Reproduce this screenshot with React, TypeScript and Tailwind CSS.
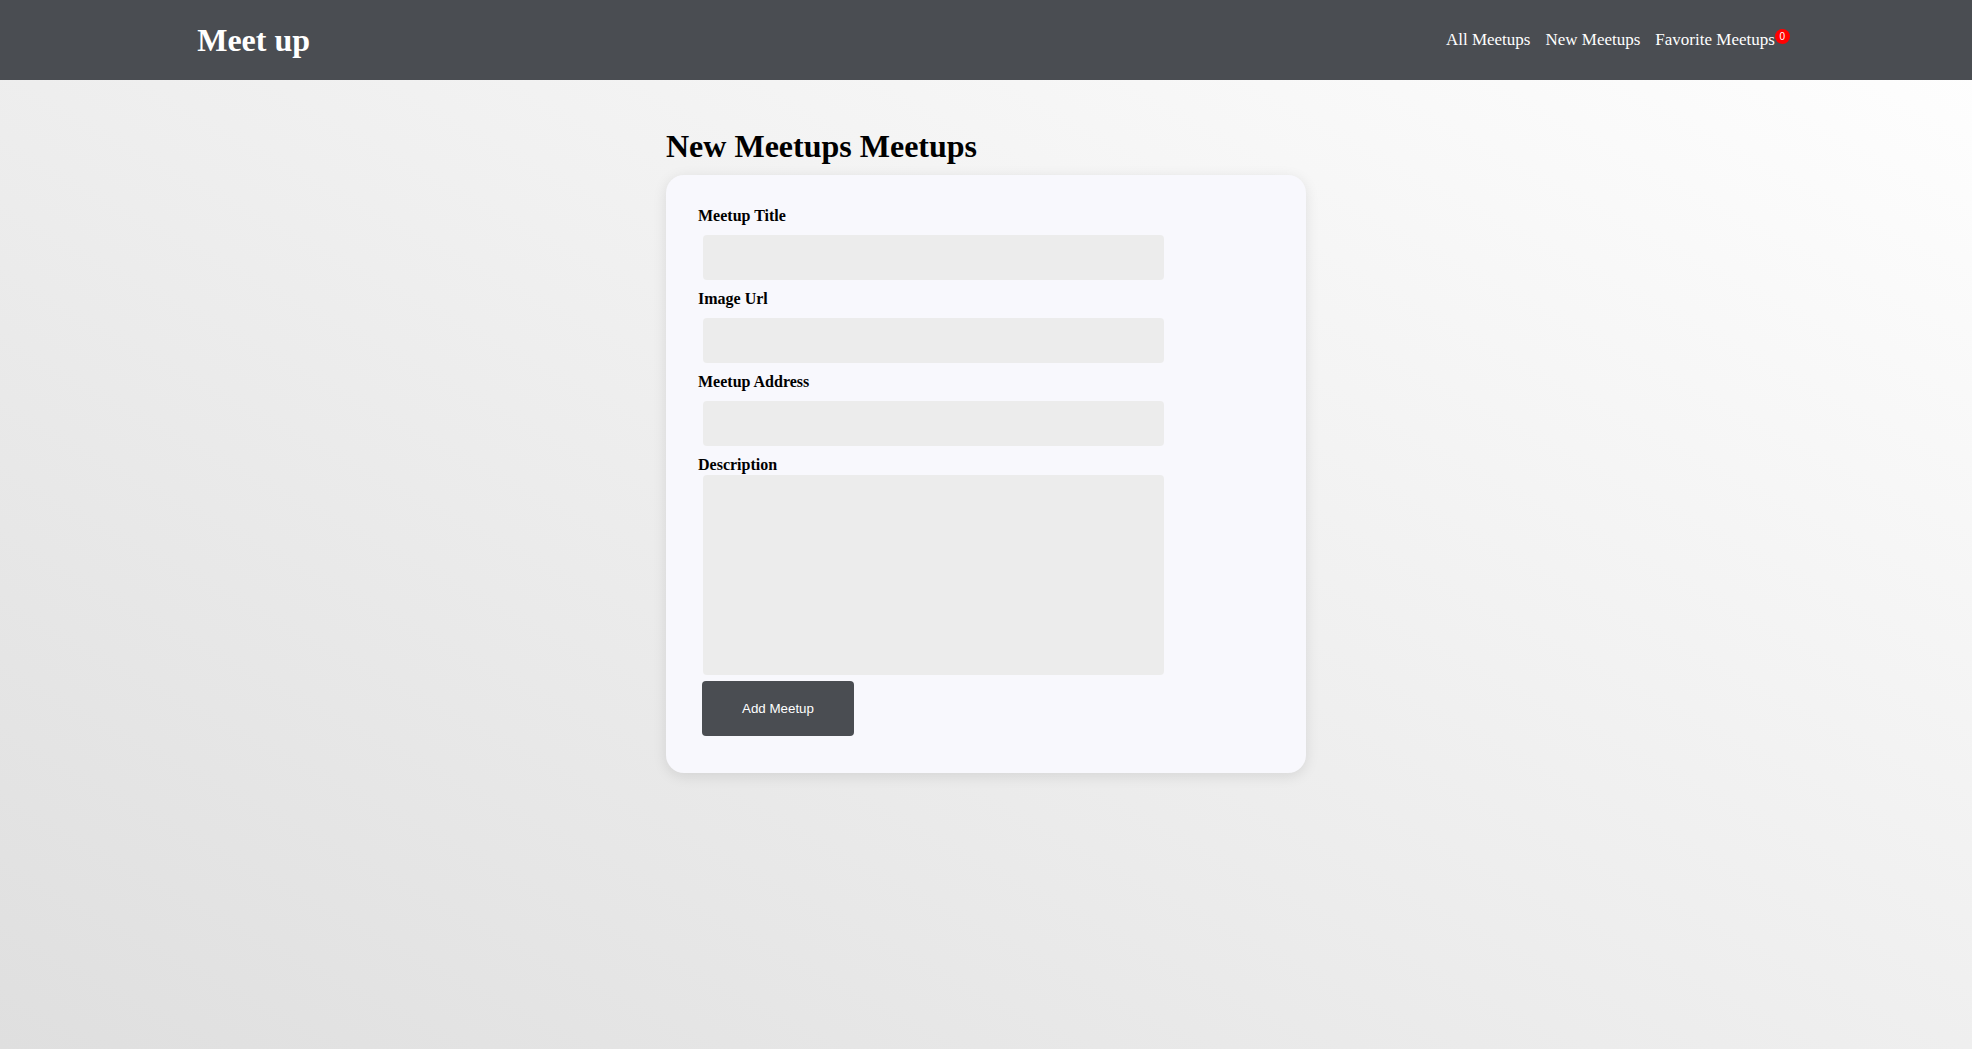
import React from "react";

const serif = "font-['Liberation_Serif','Times_New_Roman',serif]";

function Field({ label, area }: { label: string; area?: boolean }) {
  return (
    <div>
      <label className="block text-[16px] font-bold leading-[18px] text-black">{label}</label>
      {area ? (
        <textarea className="mt-[1px] ml-[5px] block h-[200px] w-[461px] resize-none rounded-[4px] bg-[#ececec] outline-none" />
      ) : (
        <input className="my-[10px] ml-[5px] block h-[45px] w-[461px] rounded-[4px] bg-[#ececec] outline-none" />
      )}
    </div>
  );
}

export default function App() {
  return (
    <div className={`min-h-screen bg-[linear-gradient(to_bottom_left,#ffffff,#dfdfdf)] ${serif}`}>
      {/* header */}
      <header className="flex h-[80px] items-center justify-between bg-[#4a4d52] px-[10%]">
        <div className="text-[32px] font-bold leading-[37px] text-white">Meet up</div>
        <nav>
          <ul className="flex items-center gap-[15px] text-[17px] text-white">
            <li>All Meetups</li>
            <li>New Meetups</li>
            <li className="relative">
              Favorite Meetups
              <span className="absolute -right-[15px] top-[2px] flex h-[15px] w-[15px] items-center justify-center rounded-full bg-[#ff0000] font-['Liberation_Sans',Arial,sans-serif] text-[10px] leading-none text-white">
                0
              </span>
            </li>
          </ul>
        </nav>
      </header>

      <main className="mx-auto w-[640px] pt-[48px]">
        <h1 className="mb-[10px] text-[32px] font-bold leading-[37px] text-black">New Meetups Meetups</h1>

        <div className="rounded-[18px] bg-[#f8f8fd] px-[32px] pt-[32px] pb-[37px] shadow-[0_3px_14px_rgba(0,0,0,0.10)]">
          <form>
            <Field label="Meetup Title" />
            <Field label="Image Url" />
            <Field label="Meetup Address" />
            <Field label="Description" area />
            <button
              type="button"
              className="mt-[6px] ml-[4px] h-[55px] w-[152px] rounded-[4px] bg-[#4a4d52] font-['Liberation_Sans',Arial,sans-serif] text-[13.33px] text-white"
            >
              Add Meetup
            </button>
          </form>
        </div>
      </main>
    </div>
  );
}
